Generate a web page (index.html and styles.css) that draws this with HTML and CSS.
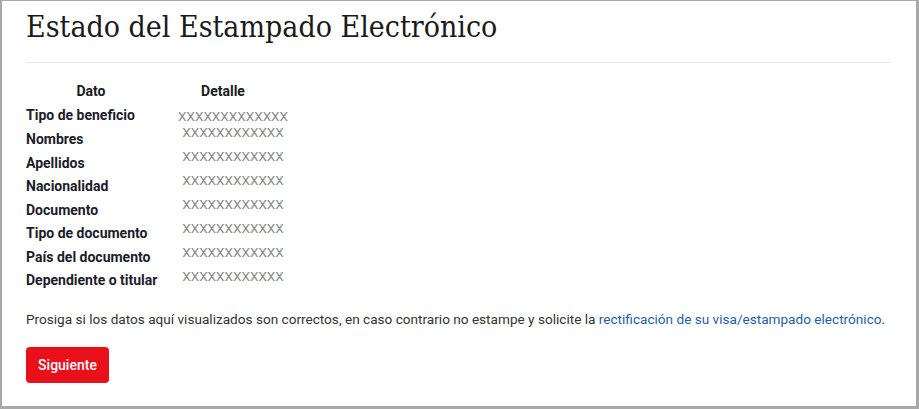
FILE: index.html
```html
<!DOCTYPE html>
<html lang="es">
<head>
    <meta charset="UTF-8">
    <meta name="viewport" content="width=device-width, initial-scale=1.0">
    <title>Estado del Estampado Electrónico</title>
    <link rel="stylesheet" href="styles.css">
</head>
<body>
    <div class="frame">
        <h1 class="title">Estado del Estampado Electrónico</h1>
        <hr class="divider">
        <div class="data">
            <div class="col col-dato">
                <div class="head">Dato</div>
                <ul class="list labels">
                    <li>Tipo de beneficio</li>
                    <li>Nombres</li>
                    <li>Apellidos</li>
                    <li>Nacionalidad</li>
                    <li>Documento</li>
                    <li>Tipo de documento</li>
                    <li>País del documento</li>
                    <li>Dependiente o titular</li>
                </ul>
            </div>
            <div class="col col-detalle">
                <div class="head">Detalle</div>
                <ul class="list values">
                    <li>XXXXXXXXXXXXX</li>
                    <li>XXXXXXXXXXXX</li>
                    <li>XXXXXXXXXXXX</li>
                    <li>XXXXXXXXXXXX</li>
                    <li>XXXXXXXXXXXX</li>
                    <li>XXXXXXXXXXXX</li>
                    <li>XXXXXXXXXXXX</li>
                    <li>XXXXXXXXXXXX</li>
                </ul>
            </div>
        </div>
        <p class="notice">Prosiga si los datos aquí visualizados son correctos, en caso contrario no estampe y solicite la <a href="#" class="link">rectificación de su visa/estampado electrónico</a>.</p>
        <button class="btn" type="button">Siguiente</button>
    </div>
</body>
</html>
```

FILE: styles.css
```css
body{
    margin: 0;
    background: #ffffff;
    font-family: Roboto, "Liberation Sans", sans-serif;
    color: #333333;
}
.frame{
    box-sizing: border-box;
    width: 919px;
    height: 409px;
    border: 2px solid #a8a8a8;
    border-top-width: 1px;
    border-right-width: 3px;
    border-bottom-width: 3px;
    padding: 6px 25px 0 24px;
}
.title{
    margin: 0;
    font-family: "DejaVu Serif Condensed", "DejaVu Serif", "Liberation Serif", serif;
    font-stretch: condensed;
    font-weight: normal;
    font-size: 30px;
    line-height: 40px;
    color: #1a1a1a;
}
.divider{
    margin: 15px 0 0 0;
    border: none;
    border-top: 1px solid #e6e6e6;
    height: 0;
}
.data{
    margin-top: 16px;
    display: flex;
    font-size: 14px;
}
.col{
    width: 130px;
}
.head{
    padding-top: 4px;
    line-height: 16px;
    font-weight: 700;
    color: #1a1a1a;
    text-align: center;
}
.list{
    list-style: none;
    margin: 0;
    padding: 0;
}
.labels{
    margin-top: 5.4px;
    font-weight: 700;
    color: #1c1c2a;
    white-space: nowrap;
}
.labels li{
    line-height: 23.5px;
}
.labels li:first-child{
    margin-bottom: 0.5px;
}
.col-detalle{
    margin-left: 2px;
}
.values{
    margin-top: 5px;
    padding-left: 20px;
    color: #8a8a8a;
    font-size: 13.5px;
    text-align: center;
}
.values li{
    line-height: 24px;
}
.values li:first-child{
    margin-bottom: -8px;
}
.notice{
    margin: 17px 0 0 0;
    font-size: 13.6px;
    line-height: 18px;
}
.link{
    color: #1f5ea8;
    text-decoration: none;
}
.btn{
    margin-top: 19px;
    width: 83px;
    height: 36px;
    border: none;
    border-radius: 4px;
    background: #e8101a;
    color: #ffffff;
    font-family: Roboto, "Liberation Sans", sans-serif;
    font-weight: 500;
    font-size: 14px;
    padding: 0;
}
```
